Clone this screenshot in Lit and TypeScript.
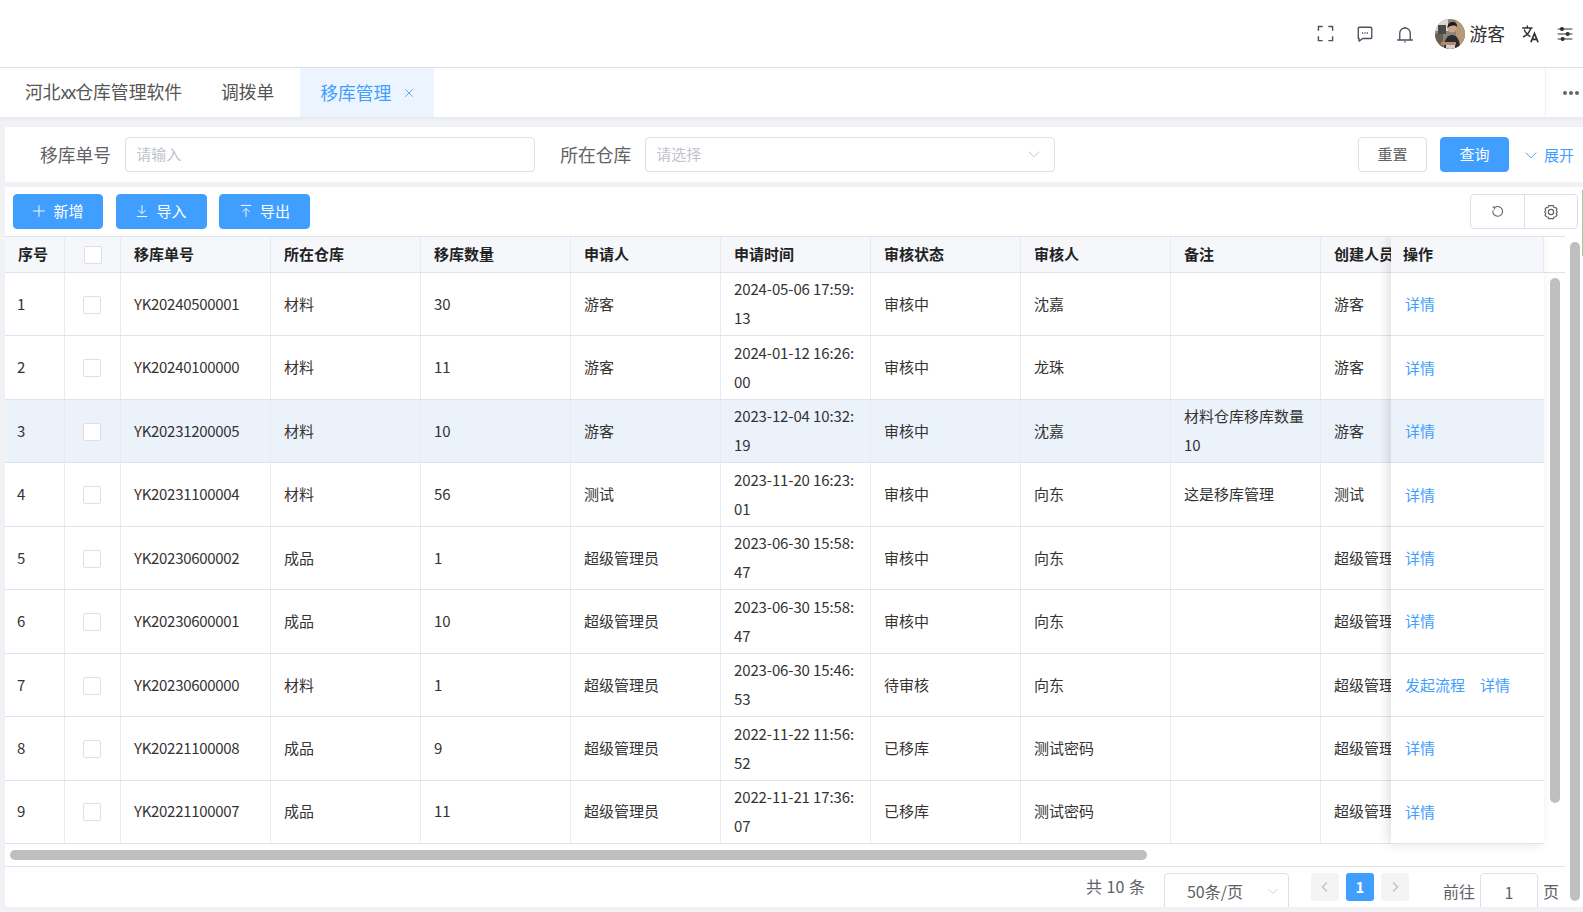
import { LitElement, html, css, svg } from 'lit';
import { customElement } from 'lit/decorators.js';
import { classMap } from 'lit/directives/class-map.js';

const COLUMNS = ['序号', '', '移库单号', '所在仓库', '移库数量', '申请人', '申请时间', '审核状态', '审核人', '备注', '创建人员'];

// no, warehouse, qty, applicant, time, status, auditor, remark, creator
const ROWS = [
  ['YK20240500001', '材料', '30', '游客', '2024-05-06 17:59:13', '审核中', '沈嘉', '', '游客'],
  ['YK20240100000', '材料', '11', '游客', '2024-01-12 16:26:00', '审核中', '龙珠', '', '游客'],
  ['YK20231200005', '材料', '10', '游客', '2023-12-04 10:32:19', '审核中', '沈嘉', '材料仓库移库数量10', '游客'],
  ['YK20231100004', '材料', '56', '测试', '2023-11-20 16:23:01', '审核中', '向东', '这是移库管理', '测试'],
  ['YK20230600002', '成品', '1', '超级管理员', '2023-06-30 15:58:47', '审核中', '向东', '', '超级管理员'],
  ['YK20230600001', '成品', '10', '超级管理员', '2023-06-30 15:58:47', '审核中', '向东', '', '超级管理员'],
  ['YK20230600000', '材料', '1', '超级管理员', '2023-06-30 15:46:53', '待审核', '向东', '', '超级管理员'],
  ['YK20221100008', '成品', '9', '超级管理员', '2022-11-22 11:56:52', '已移库', '测试密码', '', '超级管理员'],
  ['YK20221100007', '成品', '11', '超级管理员', '2022-11-21 17:36:07', '已移库', '测试密码', '', '超级管理员'],
];

const icon = (w: number, body: unknown, stroke = 1.6) => html`
  <svg width=${w} height=${w} viewBox="0 0 24 24" fill="none" stroke="currentColor" stroke-width=${stroke}>${body}</svg>
`;

const ICONS = {
  full: svg`<path d="M2 8V2h6M16 2h6v6M22 16v6h-6M8 22H2v-6"/>`,
  chat: svg`<path d="M3 4.5a1.5 1.5 0 0 1 1.5-1.5h15A1.5 1.5 0 0 1 21 4.5v12a1.5 1.5 0 0 1-1.5 1.5H9l-5 3.5V18H3z" stroke-linejoin="round"/><path d="M8 10.5h1.6M11.2 10.5h1.6M14.4 10.5H16" stroke-width="2"/>`,
  bell: svg`<path d="M1.5 20h21M5 20v-9a7 7 0 0 1 14 0v9M12 4V2.5M11 22.5h2"/>`,
  translate: svg`<path d="M1.5 5h13M8 2v3M12.5 5C11 10 7 14.5 2.5 16.5M4 7c1.5 4 5 7.5 8 9"/><path d="M12.5 23l4.500-11 4.500 11M14 19.500h6" stroke-width="2.2"/>`,
  tune: svg`<path d="M1 4.500h22M1 12h22M1 19.500h22"/><circle cx="7.500" cy="4.500" r="2.200" fill="currentColor"/><circle cx="16" cy="12" r="2.200" fill="currentColor"/><circle cx="8.500" cy="19.500" r="2.200" fill="currentColor"/>`,
  chevron: svg`<path d="M3 8l9 9 9-9"/>`,
  close: svg`<path d="M3 3l18 18M21 3L3 21"/>`,
  plus: svg`<path d="M12 2v20M2 12h20"/>`,
  down: svg`<path d="M12 2v14M6 10.500l6 6 6-6M3 21.500h18"/>`,
  up: svg`<path d="M12 22V8M6 13.500l6-6 6 6M3 2.500h18"/>`,
  reload: svg`<path d="M7 4.500A9 9 0 1 1 3.500 10M3 3.500l4 1-1 4"/>`,
  gear: svg`<path d="M8.500 2.500h7l1 2.500 2.700.4 1.700 2.200-1 2.400 1.600 2-1.600 2.500 1 2.400-1.700 2.200-2.700.4-1 2.500h-7l-1-2.500-2.700-.4-1.700-2.200 1-2.400-1.600-2.500 1.600-2-1-2.400 1.700-2.200L7.500 5z" stroke-linejoin="round"/><circle cx="12" cy="12" r="4"/>`,
  left: svg`<path d="M16 3l-9 9 9 9"/>`,
  right: svg`<path d="M8 3l9 9-9 9"/>`,
};

@customElement('app-root')
export class AppRoot extends LitElement {
  static styles = css`
    :host {
      display: block;
      position: relative;
      width: 1583px;
      height: 912px;
      overflow: hidden;
      background: #f0f2f6;
      font-family: "Noto Sans CJK SC", "Open Sans", sans-serif;
      font-size: 15px;
      color: #303133;
    }
    .top {
      height: 67px;
      background: #fff;
      border-bottom: 1px solid #dfe1e8;
      display: flex;
      align-items: center;
      justify-content: flex-end;
      padding-right: 10px;
      color: #4a5260;
    }
    .top .ico { display: flex; margin-right: 22px; }
    .avatar { width: 30px; height: 30px; margin-left: -1px; margin-right: 4px; }
    .user { font-size: 17.8px; color: #303133; margin-right: 16px; padding-bottom: 2px; }
    .top .dark { color: #303133; margin-right: 17px; }
    .top .dark:last-child { margin-right: 0; }

    .tabs {
      height: 49px;
      background: #fff;
      display: flex;
      font-size: 17.8px;
      color: #555;
      box-shadow: 0 1px 4px rgba(0, 21, 41, 0.06);
      position: relative;
    }
    .tab { padding: 0 20px; line-height: 47px; }
    .tab.first { padding: 0 19px 0 25px; }
    .tab .xx { letter-spacing: -2px; margin-right: 1px; }
    .tab.active { background: #ecf5ff; color: #409eff; margin-left: 5.8px; display: flex; gap: 13px; align-items: center; padding-right: 20px; }
    .more {
      margin-left: auto;
      width: 38px;
      box-sizing: border-box;
      border-left: 1px solid #f0f0f0;
      display: flex;
      align-items: center;
      gap: 2px;
      padding-left: 17px;
    }
    .more i { width: 4px; height: 4px; border-radius: 50%; background: #666; flex: none; }

    .search {
      height: 55px;
      margin: 10px 0 5px 5px;
      background: #fff;
      display: flex;
      align-items: center;
      padding: 0 9px 0 35px;
      color: #606266;
      font-size: 17.8px;
    }
    .search .lab { margin-right: 14px; white-space: nowrap; padding-bottom: 1px; }
    .field {
      width: 410px;
      height: 35px;
      box-sizing: border-box;
      border: 1px solid #dcdfe6;
      border-radius: 4px;
      margin-right: 25px;
      padding: 0 13px 2px 10px;
      display: flex;
      align-items: center;
      justify-content: space-between;
      font-size: 15px;
      color: #c0c4cc;
    }
    .btn {
      width: 69px;
      height: 35px;
      box-sizing: border-box;
      border: 1px solid #dcdfe6;
      border-radius: 4px;
      padding-bottom: 2px;
      display: flex;
      align-items: center;
      justify-content: center;
      font-size: 15px;
      color: #606266;
      background: #fff;
    }
    .btn.primary { background: #409eff; border-color: #409eff; color: #fff; }
    .search .reset { margin-left: auto; margin-right: 13px; }
    .expand { display: flex; align-items: center; gap: 6px; margin-left: 15px; color: #409eff; font-size: 15px; }

    .panel {
      height: 720px;
      margin-left: 5px;
      background: #fff;
      border-radius: 0 0 4px 4px;
      overflow: hidden;
      position: relative;
    }
    .tools {
      height: 49px;
      box-sizing: border-box;
      padding: 7px 5px 0 8px;
      display: flex;
      gap: 12.5px;
    }
    .tools .btn { width: 91px; gap: 7px; }
    .tools .first { width: 90px; }
    .tools .seg {
      margin-left: auto;
      display: flex;
      width: 108px;
      height: 35px;
      box-sizing: border-box;
      border: 1px solid #dcdfe6;
      border-radius: 4px;
      color: #606266;
    }
    .seg span { flex: 1; display: flex; align-items: center; justify-content: center; }
    .seg span + span { border-left: 1px solid #dcdfe6; }

    .table {
      width: 1560px;
      height: 631px;
      position: relative;
      overflow: hidden;
      border-bottom: 1px solid #dfe3ec;
      border-top: 1px solid #dfe3ec;
      box-sizing: border-box;
    }
    .row {
      display: grid;
      grid-template-columns: 60px 56px repeat(9, 150px);
      width: 1539px;
      overflow: hidden;
      height: 63.45px;
      box-sizing: border-box;
      border-bottom: 1px solid #dfe3ec;
    }
    .row.head {
      width: 1560px;
      height: 36px;
      background: linear-gradient(to right, #f5f7fa 1539px, #fff 1539px);
      font-weight: 700;
      color: #222;
    }
    .row.hi { background: #ebf2fa; }
    .cell {
      box-sizing: border-box;
      border-right: 1px solid #e8ebf2;
      padding: 0 13px 1.5px;
      line-height: 29px;
      display: flex;
      align-items: center;
      color: #333;
      min-width: 0;
    }
    .cell span { word-break: break-all; }
    .head .cell { color: #222; padding-bottom: 2px; }
    .cell.no { padding-left: 12px; }
    .head .cell.no { padding-left: 13px; }
    .cell.code span { letter-spacing: -0.3px; }
    .cell.time span { letter-spacing: -0.12px; }
    .cell.chk { justify-content: center; padding: 1.5px 1px 0 0; }
    .head .cell.chk { padding: 0; }
    .cell.last { white-space: nowrap; }
    .box {
      width: 18px;
      height: 18px;
      box-sizing: border-box;
      border: 1px solid #dcdfe6;
      border-radius: 2px;
      background: #fff;
    }

    .fixed {
      position: absolute;
      left: 1386px;
      top: 0;
      width: 153px;
      background: #fff;
      box-shadow: -3px 0 10px rgba(0, 0, 0, 0.12);
    }
    .fixed .row { width: 153px; display: flex; align-items: center; padding: 0 0 1px 14px; gap: 15px; color: #409eff; }
    .fixed .row.head { background: #f5f7fa; color: #222; padding: 0 0 2px 12px; border-right: 1px solid #e8ebf2; }

    .thumb { position: absolute; background: #bfbfbf; border-radius: 5px; }
    .thumb.h { left: 5px; top: 663px; width: 1137px; height: 10px; }
    .thumb.v1 { left: 1545px; top: 91px; width: 10px; height: 525px; }
    .thumb.v2 { left: 1565px; top: 55px; width: 10px; height: 659px; }

    .foot {
      height: 40px;
      box-sizing: border-box;
      width: 1560px;
      padding: 6px 6px 0 0;
      display: flex;
      justify-content: flex-end;
      align-items: flex-start;
      color: #606266;
      font-size: 16px;
    }
    .total { margin: 2px 19px 0 0; line-height: 22px; word-spacing: 1px; }
    .sel {
      width: 125px;
      height: 40px;
      box-sizing: border-box;
      border: 1px solid #dcdfe6;
      border-radius: 4px;
      padding: 5px 9px 0 22px;
      display: flex;
      justify-content: space-between;
      margin-right: 22px;
    }
    .sel svg { margin-top: 6px; color: #c0c4cc; }
    .pg {
      width: 28px;
      height: 28px;
      border-radius: 3px;
      background: #f4f4f5;
      color: #c0c4cc;
      display: flex;
      align-items: center;
      justify-content: center;
      margin-right: 7px;
      font-size: 15px;
      font-weight: 700;
    }
    .pg.on { background: #409eff; color: #fff; padding-bottom: 2px; box-sizing: border-box; }
    .goto { margin: 6px 5px 0 27px; line-height: 24px; }
    .num {
      width: 58px;
      height: 40px;
      box-sizing: border-box;
      border: 1px solid #dcdfe6;
      border-radius: 4px;
      text-align: center;
      line-height: 36px;
    }
    .page { margin: 6px 0 0 5px; line-height: 24px; }
    .stripe { position: absolute; right: 0; top: 190px; width: 1px; height: 66px; background: #86dba8; }
  `;

  private avatar() {
    return html`<svg class="avatar" viewBox="0 0 30 30">
      <defs><clipPath id="av"><circle cx="15" cy="15" r="15"/></clipPath></defs>
      <g clip-path="url(#av)">
        <rect width="30" height="30" fill="#8c8478"/>
        <rect x="0" y="0" width="13" height="12" fill="#d9d6d0"/>
        <rect x="3" y="6" width="8" height="9" fill="#4a4a48"/>
        <rect x="21" y="0" width="9" height="30" fill="#b49a78"/>
        <rect x="0" y="15" width="8" height="15" fill="#6b5f52"/>
        <path d="M9 30c0-9 3-14 8-14s8 5 8 14z" fill="#2c2c2e"/>
        <circle cx="17" cy="9" r="4.500" fill="#caa48c"/>
        <path d="M12.500 9c0-4 2-6 5-6s5 2 4.500 5c-2-2-6-2-9.500 1z" fill="#1c1a1a"/>
        <rect x="6" y="23" width="15" height="3" fill="#b5897a"/>
        <rect x="11" y="26" width="9" height="4" fill="#d8d0c8"/>
      </g>
    </svg>`;
  }

  private renderRow(r: string[], i: number) {
    return html`<div class=${classMap({ row: true, hi: i === 2 })}>
      <div class="cell no">${i + 1}</div>
      <div class="cell chk"><div class="box"></div></div>
      ${r.map((v, j) => html`<div class=${classMap({ cell: true, code: j === 0, time: j === 4, last: j === 8 })}><span>${v}</span></div>`)}
    </div>`;
  }

  render() {
    return html`
      <div class="top">
        <span class="ico">${icon(17, ICONS.full, 2)}</span>
        <span class="ico">${icon(18, ICONS.chat, 1.8)}</span>
        <span class="ico">${icon(18, ICONS.bell, 1.8)}</span>
        ${this.avatar()}
        <span class="user">游客</span>
        <span class="ico dark">${icon(19, ICONS.translate, 1.8)}</span>
        <span class="ico dark">${icon(16, ICONS.tune, 1.8)}</span>
      </div>
      <div class="tabs">
        <div class="tab first">河北<span class="xx">xx</span>仓库管理软件</div>
        <div class="tab">调拨单</div>
        <div class="tab active">移库管理${icon(10, ICONS.close, 2)}</div>
        <div class="more"><i></i><i></i><i></i></div>
      </div>
      <div class="search">
        <span class="lab">移库单号</span>
        <div class="field">请输入</div>
        <span class="lab">所在仓库</span>
        <div class="field">请选择 ${icon(14, ICONS.chevron)}</div>
        <div class="btn reset">重置</div>
        <div class="btn primary">查询</div>
        <div class="expand">${icon(14, ICONS.chevron)}展开</div>
      </div>
      <div class="panel">
        <div class="tools">
          <div class="btn primary first">${icon(14, ICONS.plus)}新增</div>
          <div class="btn primary">${icon(14, ICONS.down)}导入</div>
          <div class="btn primary">${icon(14, ICONS.up)}导出</div>
          <div class="seg"><span>${icon(13, ICONS.reload, 2)}</span><span>${icon(16, ICONS.gear, 1.8)}</span></div>
        </div>
        <div class="table">
          <div class="row head">
            ${COLUMNS.map((c, i) => html`<div class=${classMap({ cell: true, no: i === 0, chk: i === 1 })}>
              ${i === 1 ? html`<div class="box"></div>` : c}
            </div>`)}
          </div>
          ${ROWS.map((r, i) => this.renderRow(r, i))}
          <div class="fixed">
            <div class="row head">操作</div>
            ${ROWS.map((r, i) => html`<div class=${classMap({ row: true, hi: i === 2 })}>
              ${r[5] === '待审核' ? html`<span>发起流程</span>` : ''}<span>详情</span>
            </div>`)}
          </div>
        </div>
        <div class="foot">
          <span class="total">共 10 条</span>
          <div class="sel">50条/页 ${icon(12, ICONS.chevron)}</div>
          <div class="pg">${icon(12, ICONS.left, 3)}</div>
          <div class="pg on">1</div>
          <div class="pg">${icon(12, ICONS.right, 3)}</div>
          <span class="goto">前往</span>
          <div class="num">1</div>
          <span class="page">页</span>
        </div>
        <div class="thumb h"></div>
        <div class="thumb v1"></div>
        <div class="thumb v2"></div>
      </div>
      <div class="stripe"></div>
    `;
  }
}
